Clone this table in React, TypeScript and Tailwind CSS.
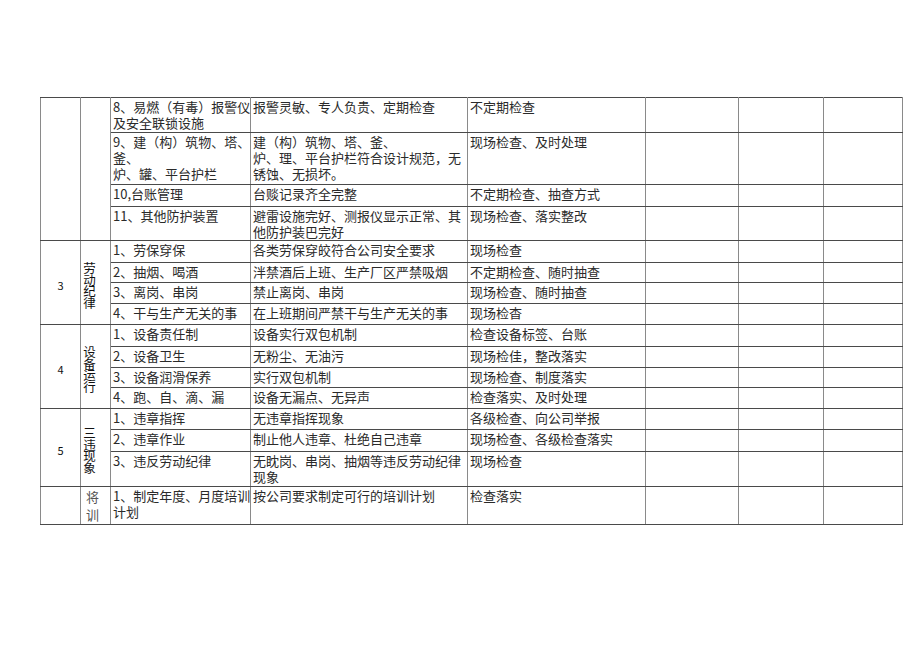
import React from "react"

type Row = { h: number; item: React.ReactNode; req: React.ReactNode; method: string }
type Group = { no: string; title: string; rows: Row[] }

const groups: Group[] = [
  {
    no: "",
    title: "",
    rows: [
      { h: 35, item: <>8、易燃（有毒）报警仪<br />及安全联锁设施</>, req: "报警灵敏、专人负贵、定期检查", method: "不定期检查" },
      {
        h: 52,
        item: <>9、建（构）筑物、塔、<br />釜、<br />炉、罐、平台护栏</>,
        req: <>建（构）筑物、塔、釜、<br />炉、理、平台护栏符合设计规范，无<br />锈蚀、无损坏。</>,
        method: "现场检查、及时处理",
      },
      { h: 22, item: "10,台账管理", req: "台赕记录齐全完整", method: "不定期检查、抽查方式" },
      { h: 33, item: "11、其他防护装置", req: <>避雷设施完好、测报仪显示正常、其<br />他防护装巴完好</>, method: "现场检查、落实整改" },
    ],
  },
  {
    no: "3",
    title: "劳动纪律",
    rows: [
      { h: 22, item: "1、劳保穿保", req: "各类劳保穿皎符合公司安全要求", method: "现场检查" },
      { h: 20, item: "2、抽烟、喝酒", req: "泮禁酒后上班、生产厂区严禁吸烟", method: "不定期检查、随时抽查" },
      { h: 21, item: "3、离岗、串岗", req: "禁止离岗、串岗", method: "现场检查、随时抽查" },
      { h: 21, item: "4、干与生产无关的事", req: "在上班期间严禁干与生产无关的事", method: "现场检杳" },
    ],
  },
  {
    no: "4",
    title: "设备运行",
    rows: [
      { h: 22, item: "1、设备责任制", req: "设备实行双包机制", method: "检查设备标签、台账" },
      { h: 21, item: "2、设备卫生", req: "无粉尘、无油污", method: "现场检佳，整改落实" },
      { h: 20, item: "3、设备润滑保养", req: "实行双包机制", method: "现场检查、制度落实" },
      { h: 21, item: "4、跑、自、滴、漏", req: "设备无漏点、无异声", method: "检查落实、及时处理" },
    ],
  },
  {
    no: "5",
    title: "三违现象",
    rows: [
      { h: 21, item: "1、违章指挥", req: "无违章指挥现象", method: "各级检查、向公司举报" },
      { h: 22, item: "2、违章作业", req: "制止他人违章、杜绝自己违章", method: "现场检查、各级检查落实" },
      { h: 35, item: "3、违反劳动纪律", req: <>无眈岗、串岗、抽烟等违反劳动纪律<br />现象</>, method: "现场检查" },
    ],
  },
]

const line = "border-x border-x-[#8a8a8a] border-y border-y-[#4a4a4a] p-0"
const cell = `${line} align-top`
const mid = `${line} align-middle`
const txt = "px-[2px] pt-[1px] text-[13px] leading-[16px] text-[#2a2a2a] whitespace-nowrap"

export default function App() {
  return (
    <div className="w-[920px] h-[651px] bg-white pt-[97px] pl-[40px]" style={{ fontFamily: '"Noto Sans CJK SC", sans-serif' }}>
      <table className="border-collapse table-fixed w-[862px]">
        <colgroup>
          <col className="w-[40px]" />
          <col className="w-[30px]" />
          <col className="w-[140px]" />
          <col className="w-[217px]" />
          <col className="w-[178px]" />
          <col className="w-[93px]" />
          <col className="w-[85px]" />
          <col className="w-[79px]" />
        </colgroup>
        <tbody>
          {groups.map((g, gi) =>
            g.rows.map((r, ri) => (
              <tr key={`${gi}-${ri}`} style={{ height: r.h }}>
                {ri === 0 && (
                  <>
                    <td rowSpan={g.rows.length} className={`${mid} text-center`}>
                      <span className="text-[11px] text-[#111]">{g.no}</span>
                    </td>
                    <td rowSpan={g.rows.length} className={mid}>
                      <div className="flex pl-[1px] pt-[6px]">
                        <span className="[writing-mode:vertical-rl] [text-orientation:upright] text-[12.5px] leading-[14px] tracking-[-0.8px] text-[#111]">
                          {g.title}
                        </span>
                      </div>
                    </td>
                  </>
                )}
                <td className={cell}>
                  <div className={txt}>{r.item}</div>
                </td>
                <td className={cell}>
                  <div className={txt}>{r.req}</div>
                </td>
                <td className={cell}>
                  <div className={txt}>{r.method}</div>
                </td>
                <td className={cell} />
                <td className={cell} />
                <td className={cell} />
              </tr>
            ))
          )}
          <tr className="h-[36px]">
            <td className={cell} />
            <td className={cell}>
              <div className="flex flex-col pl-[5px] pt-[1px] text-[13px] leading-[18px] text-[#555]">
                <span>将</span>
                <span>训</span>
              </div>
            </td>
            <td className={cell}>
              <div className={txt}>1、制定年度、月度培训<br />计划</div>
            </td>
            <td className={cell}>
              <div className={txt}>按公司要求制定可行的培训计划</div>
            </td>
            <td className={cell}>
              <div className={txt}>检查落实</div>
            </td>
            <td className={cell} />
            <td className={cell} />
            <td className={cell} />
          </tr>
        </tbody>
      </table>
    </div>
  )
}
